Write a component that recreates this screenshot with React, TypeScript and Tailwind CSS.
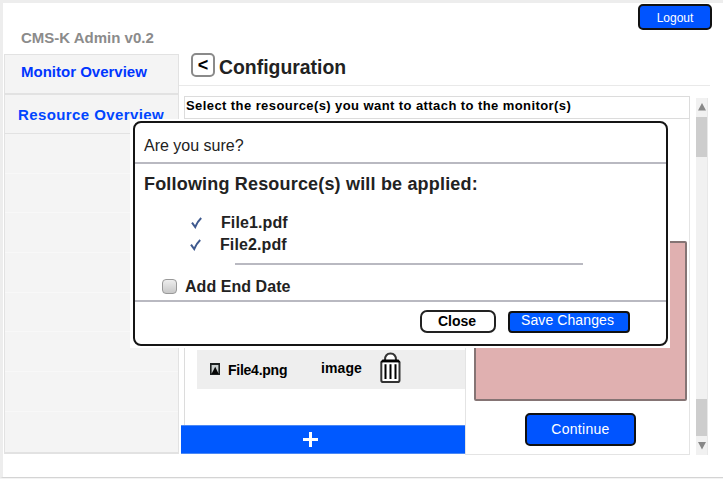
import React from 'react';

const MenuRows = () => (
  <div className="flex h-[315px] flex-col">
    {[0, 1, 2, 3, 4, 5, 6].map((n) => (
      <div key={n} className="h-[39.7px] shrink-0 border-b border-[#f8f8f8]" />
    ))}
  </div>
);

const Check = () => (
  <svg width="12" height="12" viewBox="0 0 12 12" fill="none">
    <path d="M1 5.6 L4.2 10 Q6.4 4.6 10.2 1" stroke="#3f5a8f" strokeWidth="2" />
  </svg>
);

const ImageIcon = () => (
  <svg width="10" height="12" viewBox="0 0 10 12">
    <rect width="10" height="12" fill="#1c2020" />
    <rect x="1.6" y="2" width="6.8" height="8.4" fill="#c9cfcf" />
    <path d="M1.5 11 L5.2 3.8 L8.7 11Z" fill="#050505" />
  </svg>
);

const TrashIcon = () => (
  <svg width="21" height="31" viewBox="0 0 21 31" fill="none">
    <path d="M5 8 C5 3.8 7.2 1.5 10.5 1.5 C13.8 1.5 16 3.8 16 8" fill="#fff" stroke="#333" strokeWidth="2" />
    <rect x="1.3" y="9.2" width="18.2" height="20.8" rx="1.8" fill="#fff" stroke="#333" strokeWidth="2" />
    <path d="M2.5 7.5 H18.5 L20.5 10.2 H0.5Z" fill="#000" />
    <path d="M5.5 12.2 V27 M10.5 12.2 V27 M15.5 12.2 V27" stroke="#000" strokeWidth="2" />
  </svg>
);

const Dialog = () => (
  <div className="absolute left-[130px] top-[119px] h-[229px] w-[540px] bg-white pl-[3px] pt-[2px]">
    <div className="flex h-[225px] w-[535px] flex-col rounded-[8px] border-2 border-[#151515] text-[#222]">
      <div className="h-[41px] border-b-2 border-[#b9b9c1] pl-[9px] pt-[11px] text-[16px] leading-[24px]">Are you sure?</div>
      <div className="mt-[8px] pl-[9px] text-[18px] font-bold leading-[24px] tracking-[0.18px]">
        Following Resource(s) will be applied:
      </div>
      <div className="mt-[16px] flex h-[22px] items-center pl-[56px] text-[16px] font-bold">
        <Check />
        <span className="ml-[18px] tracking-[0.1px]">File1.pdf</span>
      </div>
      <div className="flex h-[22px] items-center pl-[55px] text-[16px] font-bold">
        <Check />
        <span className="ml-[18px] tracking-[0.1px]">File2.pdf</span>
      </div>
      <div className="ml-[100px] mt-[7px] h-[2px] w-[348px] shrink-0 bg-[#b9b9c1]" />
      <div className="flex h-[37px] items-center border-b-2 border-[#b9b9c1] pl-[27px] pt-[8px] text-[16px] font-bold">
        <span className="h-[15px] w-[15px] rounded-[4px] border border-[#999] bg-linear-to-b from-[#eee] to-[#c8c8c8]" />
        <span className="ml-[8px] tracking-[0.05px]">Add End Date</span>
      </div>
      <div className="flex pl-[285px] pt-[8px]">
        <button className="flex h-[23px] w-[76px] items-center justify-center rounded-[7px] border-2 border-[#222] text-[14px] font-bold text-black">
          <span className="-ml-[2px]">Close</span>
        </button>
        <button className="ml-[12px] mt-px flex h-[22px] w-[122px] justify-center rounded-[4px] border-2 border-[#111] bg-[#0059ff] text-[14px] leading-[15px] tracking-[0.1px] text-white">
          <span className="-ml-[3px]">Save Changes</span>
        </button>
      </div>
    </div>
  </div>
);

export default function App() {
  return (
    <div className="relative h-[479px] w-[723px] overflow-hidden bg-[#f3f3f3] font-['Liberation_Sans',Arial,sans-serif]">
      <div className="h-[478px] border-b border-l-[3px] border-t-[3px] border-b-[#d4d4d4] border-l-[#ededed] border-t-[#ededed] bg-white">
        <header className="flex h-[51px] justify-between pl-[18px] pr-[11px]">
          <h1 className="pt-[25px] text-[15px] font-bold leading-[20px] text-[#8b8b8b]">CMS-K Admin v0.2</h1>
          <button className="mt-[1px] h-[26px] w-[74px] rounded-[5px] border-2 border-[#111] bg-[#0054ff] pt-[3px] text-[12px] leading-[19px] text-white">
            Logout
          </button>
        </header>
        <div className="flex">
          <nav className="ml-px h-[400px] w-[175px] border border-[#e2e2e2] border-b-2 bg-[#f4f4f4] text-[15px] font-bold text-[#0046ff]">
            <div className="h-[40px] border-b-2 border-[#e2e2e2] pl-[16px] pt-[7px] leading-[20px] text-[#0036ff]">Monitor Overview</div>
            <div className="h-[39px] border-b border-[#e2e2e2] pl-[13px] pt-[10px] leading-[20px] tracking-[0.4px]">Resource Overview</div>
            <MenuRows />
          </nav>
          <main className="flex-1">
            <div className="flex h-[32px] w-[531px] border-b border-[#e9e9e9] pl-[12px]">
              <button className="mt-[-1px] h-[24px] w-[24px] rounded-[5px] border-2 border-[#8a8a8a] text-[18px] font-bold leading-[20px] text-black">
                &lt;
              </button>
              <h2 className="ml-[4px] text-[19.4px] font-bold leading-[26px] text-[#222]">Configuration</h2>
            </div>
            <div className="mt-[10px] flex">
              <section className="ml-[2px] w-[509px]">
                <div className="ml-[3px] h-[23px] w-[506px] border border-[#dcdcdc] pl-[1px] text-[13px] font-bold leading-[18px] tracking-[0.42px] text-black">
                  Select the resource(s) you want to attach to the monitor(s)
                </div>
                <div className="flex h-[336px]">
                  <div className="flex w-[284px] flex-col">
                    <div className="ml-[3px] h-[306px] border-l border-[#dcdcdc] pl-[12px] pt-[231px]">
                      <div className="flex h-[39px] bg-[#eee] text-[14px] font-bold text-black">
                        <span className="ml-[13px] mt-[13px]"><ImageIcon /></span>
                        <span className="ml-[8px] mt-[10px] w-[93px] tracking-[-0.25px]">File4.png</span>
                        <span className="mt-[8px] w-[59px] tracking-[0.1px]">image</span>
                        <span className="mt-[2px]"><TrashIcon /></span>
                      </div>
                    </div>
                    <button className="flex h-[29px] items-center justify-center border-y border-[#4b88f5] bg-[#0059ff] pr-[25px]">
                      <svg width="15" height="15" viewBox="0 0 15 15">
                        <path d="M7.5 0V15M0 7.5H15" stroke="#fff" strokeWidth="3" />
                      </svg>
                    </button>
                  </div>
                  <div className="flex w-[225px] flex-col items-center border border-t-0 border-[#e4e4e4]">
                    <div className="ml-[6px] mt-[122px] h-[160px] w-[213px] shrink-0 rounded-[2px] border-2 border-[#857474] bg-[#e0b0b0]" />
                    <button className="ml-[6px] mt-[12px] h-[33px] w-[111px] shrink-0 rounded-[5px] border-2 border-[#111] bg-[#0054ff] pb-[1px] text-[14px] leading-[27px] tracking-[0.3px] text-white">
                      Continue
                    </button>
                  </div>
                </div>
              </section>
              <aside className="ml-[6px] mt-[2px] flex h-[357px] w-[12px] flex-col items-center border-r border-[#e8e8e8] bg-[#f1f1f1]">
                <svg width="10" height="19" viewBox="0 0 10 19"><path d="M1 12.5H9L5 5Z" fill="#888" /></svg>
                <div className="h-[40px] w-[11px] shrink-0 bg-[#cdcdcd]" />
                <div className="flex-1" />
                <div className="h-[37px] w-[11px] shrink-0 bg-[#cdcdcd]" />
                <svg width="10" height="19" viewBox="0 0 10 19"><path d="M1 6H9L5 13.5Z" fill="#888" /></svg>
              </aside>
            </div>
          </main>
        </div>
      </div>
      <Dialog />
    </div>
  );
}
